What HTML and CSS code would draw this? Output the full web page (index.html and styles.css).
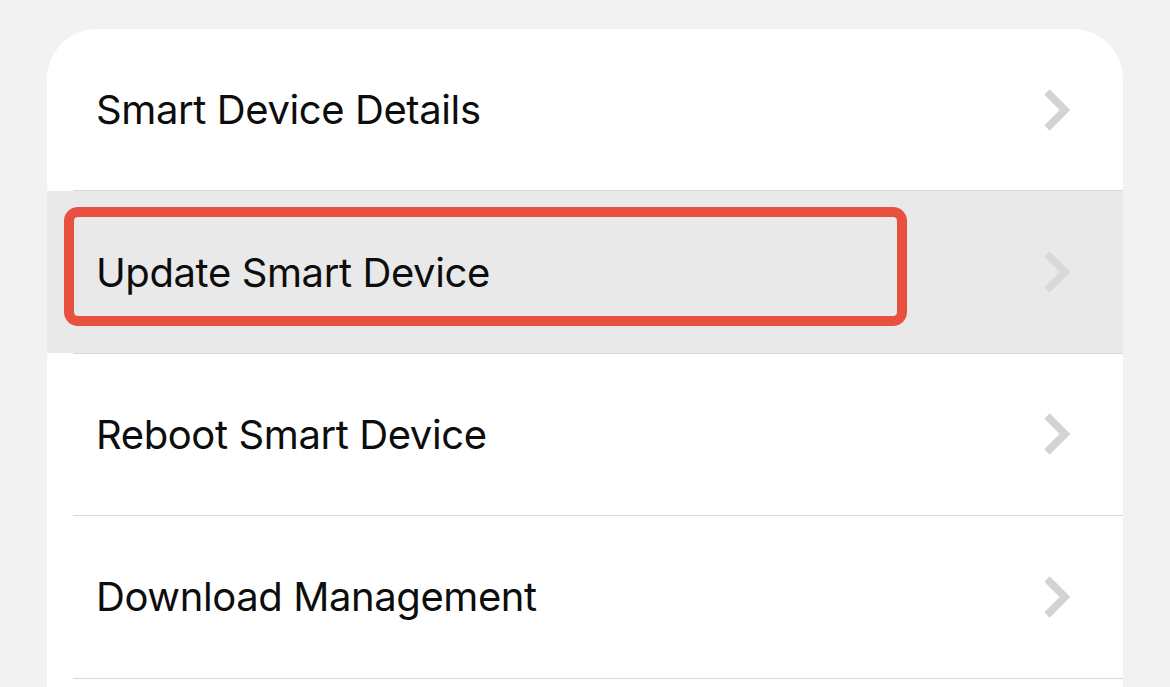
FILE: index.html
```html
<!DOCTYPE html>
<html>
<head>
<meta charset="utf-8">
<link rel="stylesheet" href="styles.css">
</head>
<body>
<div class="page">
  <div class="card">
    <div class="row">
      <span class="label">Smart Device Details</span>
      <svg class="chev" viewBox="0 0 28 44" width="28" height="44"><path d="M4 4 L22 22 L4 40" fill="none" stroke="#d3d3d3" stroke-width="7.5" stroke-linecap="butt" stroke-linejoin="miter"/></svg>
    </div>
    <div class="row active">
      <span class="label">Update Smart Device</span>
      <svg class="chev" viewBox="0 0 28 44" width="28" height="44"><path d="M4 4 L22 22 L4 40" fill="none" stroke="#d9d9d9" stroke-width="7.5" stroke-linecap="butt" stroke-linejoin="miter"/></svg>
      <div class="highlight"></div>
    </div>
    <div class="row">
      <span class="label">Reboot Smart Device</span>
      <svg class="chev" viewBox="0 0 28 44" width="28" height="44"><path d="M4 4 L22 22 L4 40" fill="none" stroke="#d3d3d3" stroke-width="7.5" stroke-linecap="butt" stroke-linejoin="miter"/></svg>
    </div>
    <div class="row">
      <span class="label">Download Management</span>
      <svg class="chev" viewBox="0 0 28 44" width="28" height="44"><path d="M4 4 L22 22 L4 40" fill="none" stroke="#d3d3d3" stroke-width="7.5" stroke-linecap="butt" stroke-linejoin="miter"/></svg>
    </div>
    <div class="row">
      <span class="label"></span>
    </div>
  </div>
</div>
</body>
</html>
```
FILE: styles.css
```css
html, body {
  margin: 0;
  padding: 0;
  background: #f2f2f2;
  overflow: hidden;
}
.page {
  width: 1170px;
  height: 687px;
  padding: 29px 47px 0 47px;
  box-sizing: border-box;
  overflow: hidden;
}
.card {
  background: #ffffff;
  border-radius: 50px 50px 0 0;
  overflow: hidden;
}
.row {
  position: relative;
  height: 161.4px;
  display: flex;
  align-items: center;
  justify-content: space-between;
  padding: 0 52px 0 49px;
  box-sizing: content-box;
}
.row + .row::before {
  content: "";
  position: absolute;
  top: -1px;
  left: 26px;
  right: 0;
  height: 1px;
  background: #d8d8d8;
}
.row + .row {
  margin-top: 1px;
}
.row.active {
  background: #e9e9e9;
}
.label {
  font-family: "Inter", "Liberation Sans", sans-serif;
  font-size: 40px;
  color: #0d0d0d;
  letter-spacing: -0.4px;
}
.chev {
  display: block;
  flex: none;
}
.highlight {
  position: absolute;
  left: 17px;
  top: 16px;
  width: 843px;
  height: 119px;
  border: 10px solid #e8503f;
  border-radius: 14px;
  box-sizing: border-box;
}
```
